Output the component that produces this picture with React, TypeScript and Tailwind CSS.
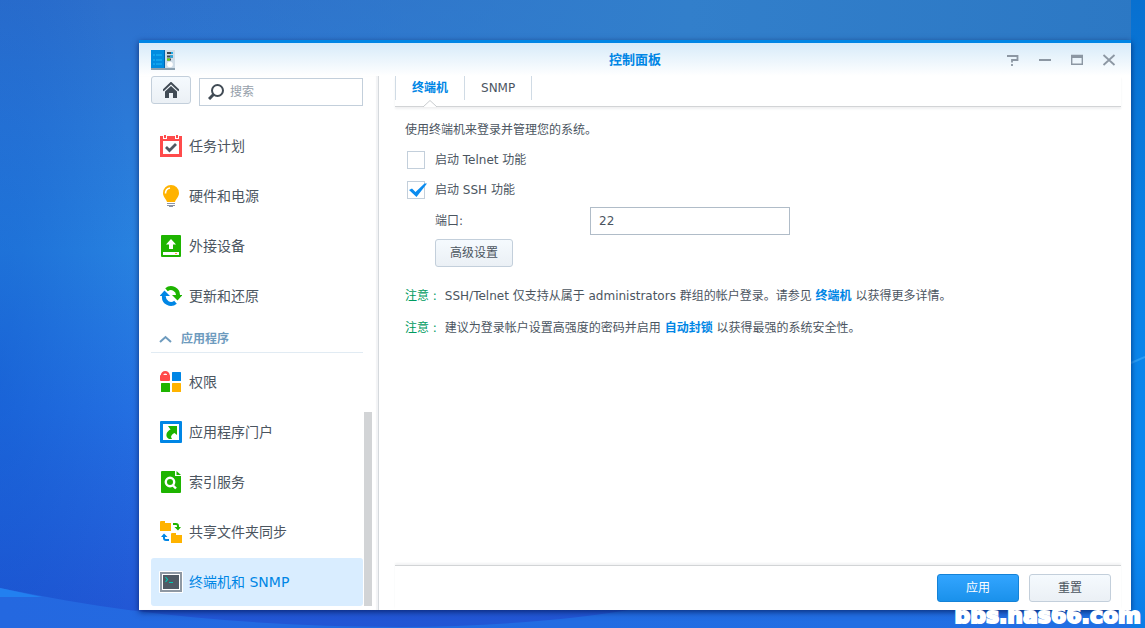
import { useState, type ReactNode } from "react";

const ICON = "h-[22px] w-[22px] shrink-0";

function TaskIcon() {
  return (
    <svg viewBox="0 0 22 22" className={ICON}>
      <path d="M0 1h3v3h4V1h8v3h4V1h3v21H0z" fill="#ff4b4b" />
      <path d="M4 0h2v3H4zM16 0h2v3h-2z" fill="#ff4b4b" />
      <path d="M3 6h16v13H3z" fill="#fff" />
      <path d="M6 12l3.500 3.500L16 9" fill="none" stroke="#505a64" strokeWidth="2.800" />
    </svg>
  );
}

function BulbIcon() {
  return (
    <svg viewBox="0 0 22 22" className={ICON}>
      <path
        d="M11 0a8 8 0 0 0-8 8c0 4 3 5.500 4 9h8c1-3.500 4-5 4-9a8 8 0 0 0-8-8z"
        fill="#ffb300"
      />
      <path d="M5.500 8.500A5.500 5.500 0 0 1 10 3" fill="none" stroke="#fff" strokeWidth="1.600" />
      <path d="M7 18h8v1H7zM7 20h8v1H7zM9 21h4v1H9z" fill="#8c94a5" />
    </svg>
  );
}

function DeviceIcon() {
  return (
    <svg viewBox="0 0 22 22" className={ICON}>
      <rect x="1" width="20" height="22" rx="1" fill="#1eb400" />
      <path d="M11 4l5 5.500h-3V14H9V9.500H6z" fill="#fff" />
      <path d="M3 17h16v3H3z" fill="#fff" />
      <path d="M15 18h2v1h-2z" fill="#ffa030" />
    </svg>
  );
}

function RestoreIcon() {
  return (
    <svg viewBox="0 0 22 22" className={ICON}>
      <path d="M6.500 4.800A7 7 0 0 1 18 10.500" fill="none" stroke="#1eb400" strokeWidth="4" />
      <path d="M12 10h10.500L17.500 15.500z" fill="#1eb400" />
      <path d="M15.500 17.200A7 7 0 0 1 4 11" fill="none" stroke="#0086e5" strokeWidth="4" />
      <path d="M-.5 11h10.500L4.500 5.500z" fill="#0086e5" />
    </svg>
  );
}

function PrivilegeIcon() {
  return (
    <svg viewBox="0 0 22 22" className={ICON}>
      <path d="M2 6V4.500a3.200 3.200 0 0 1 6.500 0V6" fill="none" stroke="#ff4b4b" strokeWidth="2.500" />
      <rect y="4" width="10" height="6" rx="1" fill="#ff4b4b" />
      <rect x="12" y="1" width="9" height="9" rx=".5" fill="#0086e5" />
      <rect x="1" y="12" width="9" height="9" rx=".5" fill="#1eb400" />
      <rect x="12" y="12" width="9" height="9" rx=".5" fill="#ffb300" />
    </svg>
  );
}

function PortalIcon() {
  return (
    <svg viewBox="0 0 22 22" className={ICON}>
      <rect width="22" height="22" rx="1" fill="#0086e5" />
      <path d="M3 3h16v16H3z" fill="#fff" />
      <path
        d="M8 5h9v9l-2.500-2c-2 1-3.500 2.500-3.500 4l1 2H9c-2-1-3-3-2.500-5 .5-2 2-3.500 4-4.500z"
        fill="#1eb400"
      />
    </svg>
  );
}

function IndexIcon() {
  return (
    <svg viewBox="0 0 22 22" className={ICON}>
      <path d="M2 0h13v5h6v16a1 1 0 0 1-1 1H2a1 1 0 0 1-1-1V1a1 1 0 0 1 1-1z" fill="#1eb400" />
      <path d="M16.500 0L21 4h-4.500z" fill="#1eb400" />
      <circle cx="10" cy="11" r="4.200" fill="none" stroke="#fff" strokeWidth="2.400" />
      <path d="M12.500 14l3.500 3.500" stroke="#fff" strokeWidth="2.400" />
    </svg>
  );
}

function SyncIcon() {
  return (
    <svg viewBox="0 0 22 22" className={ICON}>
      <path d="M0 1a1 1 0 0 1 1-1h4v2h6v8H0z" fill="#ffb300" />
      <path d="M11 13a1 1 0 0 1 1-1h4v2h6v8H11z" fill="#ffb300" />
      <path d="M13 2h3c2 0 3 1 3 3v1h2l-3 3.500L14.500 6H17V5c0-1-.5-1-1.500-1H13z" fill="#1eb400" />
      <path d="M9 20H6c-2 0-3-1-3-3v-1H1l3-3.500L7.500 16H5v1c0 1 .5 1 1.500 1H9z" fill="#0086e5" />
    </svg>
  );
}

function TerminalIcon() {
  return (
    <svg viewBox="0 0 22 22" className={`${ICON} overflow-visible`}>
      <rect x="-1" width="24" height="22" rx="1" fill="#fff" />
      <rect y="1" width="22" height="20" fill="#8e98a3" />
      <path d="M2 3h18v16H2z" fill="#fff" />
      <path d="M3 4h16v14H3z" fill="#505a64" />
      <path d="M5.500 6l2 2.500-2 2.500M9 11.500h4" fill="none" stroke="#00c8b4" strokeWidth="1.200" />
    </svg>
  );
}

function PanelLogo() {
  return (
    <svg viewBox="0 0 24 22" className="h-[22px] w-6">
      <path d="M0 19h24v2H0z" fill="#8aa0b0" />
      <path d="M0 1h14v18H0z" fill="#008ce0" />
      <path d="M13 1h1v18h-1z" fill="#0064af" />
      <path d="M14 1h10v18H14z" fill="#cfdde8" />
      <path d="M2 6h2M5 6h6M2 11h2M5 11h6M2 15h2M5 15h6" stroke="#1eb9fa" />
      <path d="M16 4h6M16 7.500h6M16 10.500h4" stroke="#3c464f" strokeWidth="2" />
      <path d="M20 4h2M19 7.500h3" stroke="#1eaae6" strokeWidth="2" />
      <path d="M16 10.500h3" stroke="#6ed200" strokeWidth="2" />
      <circle cx="19" cy="15.500" r="2.800" fill="#fff" />
    </svg>
  );
}

const SYSTEM_ITEMS = [
  { label: "任务计划", icon: <TaskIcon /> },
  { label: "硬件和电源", icon: <BulbIcon /> },
  { label: "外接设备", icon: <DeviceIcon /> },
  { label: "更新和还原", icon: <RestoreIcon /> },
];

const APP_ITEMS = [
  { label: "权限", icon: <PrivilegeIcon /> },
  { label: "应用程序门户", icon: <PortalIcon /> },
  { label: "索引服务", icon: <IndexIcon /> },
  { label: "共享文件夹同步", icon: <SyncIcon /> },
  { label: "终端机和 SNMP", icon: <TerminalIcon /> },
];

function NavItem({
  label,
  icon,
  active,
  onClick,
}: {
  label: string;
  icon: ReactNode;
  active: boolean;
  onClick: () => void;
}) {
  return (
    <button
      type="button"
      onClick={onClick}
      className={`my-px flex h-12 w-full items-center gap-[7px] rounded-[3px] pl-[9px] text-left text-sm ${
        active ? "bg-[#d9edff] text-[#0086e5]" : "text-[#4b555f]"
      }`}
    >
      {icon}
      {label}
    </button>
  );
}

function CheckRow({
  label,
  checked,
  onChange,
}: {
  label: string;
  checked: boolean;
  onChange: (value: boolean) => void;
}) {
  return (
    <label className="flex h-[30px] items-center gap-[10px] pl-[2px]">
      <span className="grid">
        <input
          type="checkbox"
          checked={checked}
          onChange={(e) => onChange(e.target.checked)}
          className="peer col-start-1 row-start-1 h-[18px] w-[18px] appearance-none border border-[#c3cfdb] bg-white"
        />
        <svg
          viewBox="0 0 18 18"
          className="pointer-events-none invisible col-start-1 row-start-1 h-[18px] w-[18px] overflow-visible peer-checked:visible"
        >
          <path d="M2 9l3-1.500L8.500 11 17.500 2.500h2.500L9.500 16z" fill="#0a8cf0" />
        </svg>
      </span>
      {label}
    </label>
  );
}

function Wallpaper() {
  return (
    <svg
      viewBox="0 0 1145 628"
      preserveAspectRatio="none"
      className="absolute inset-0 -z-10 h-full w-full"
    >
      <defs>
        <linearGradient id="sky" x1="0" y1="0" x2="0" y2="1">
          <stop offset="0" stopColor="#2d70cc" />
          <stop offset=".2" stopColor="#2b7ad8" />
          <stop offset=".4" stopColor="#2882e0" />
          <stop offset=".65" stopColor="#2470e2" />
          <stop offset="1" stopColor="#2255d4" />
        </linearGradient>
        <linearGradient id="top" x1="0" y1="0" x2="1" y2="0">
          <stop offset="0" stopColor="#327fcb" stopOpacity="0" />
          <stop offset=".12" stopColor="#327fcb" stopOpacity="0" />
          <stop offset=".6" stopColor="#327fcb" />
          <stop offset="1" stopColor="#2c78c4" />
        </linearGradient>
        <radialGradient id="shade" cx="0" cy=".6" r="1">
          <stop offset="0" stopColor="#0a50c8" stopOpacity=".4" />
          <stop offset="1" stopColor="#0a50c8" stopOpacity="0" />
        </radialGradient>
        <linearGradient id="wave" x1="0" y1="0" x2="1" y2="0">
          <stop offset="0" stopColor="#2468e0" />
          <stop offset="1" stopColor="#2070e4" />
        </linearGradient>
        <linearGradient id="edge" x1="0" y1="0" x2="0" y2="1">
          <stop offset="0" stopColor="#0870d0" />
          <stop offset=".4" stopColor="#0a82e6" />
          <stop offset=".85" stopColor="#0a8af2" />
          <stop offset="1" stopColor="#0c7ce6" />
        </linearGradient>
      </defs>
      <rect width="1145" height="628" fill="url(#sky)" />
      <rect width="1145" height="44" fill="url(#top)" />
      <rect width="139" height="628" fill="url(#shade)" />
      <path d="M0 588C140 617 260 626 400 627Q540 626 640 608H1145V628H0z" fill="url(#wave)" />
      <path d="M0 588L42 597H0z" fill="#2280f0" />
      <rect x="1131" width="14" height="628" fill="url(#edge)" />
      <path d="M1131 363l14-6" stroke="#2a9cf4" strokeWidth="2" />
    </svg>
  );
}

export default function App() {
  const [active, setActive] = useState("终端机和 SNMP");
  const [telnet, setTelnet] = useState(false);
  const [ssh, setSsh] = useState(true);
  const [port, setPort] = useState("22");

  const plainButton =
    "h-7 rounded-[3px] border border-[#c3cfdb] bg-linear-to-b from-[#f5fafe] to-[#ebf0f5]";

  return (
    <div className="relative isolate flex min-h-screen flex-col pt-10 pr-[14px] pb-[18px] pl-[139px] font-['DejaVu_Sans','Noto_Sans_CJK_SC',sans-serif] text-xs text-[#4b555f]">
      <Wallpaper />

      <main className="flex flex-1 flex-col border-t-[3px] border-[#0086e5] bg-white shadow-[0_2px_6px_rgba(0,20,80,0.7)]">
        <header className="grid h-[33px] grid-cols-3 items-center bg-linear-to-b from-[#d7ebf9] to-white px-3">
          <PanelLogo />
          <h1 className="text-center text-[13px] font-bold text-[#0086e5]">控制面板</h1>
          <div className="flex justify-end gap-4 pr-[2px] text-[#8c97a3]">
            <button type="button" aria-label="帮助">
              <svg viewBox="0 0 16 16" className="h-4 w-4">
                <path d="M2 4h10.500v4H7v2.500M7 12v2" fill="none" stroke="currentColor" strokeWidth="1.800" />
              </svg>
            </button>
            <button type="button" aria-label="最小化">
              <svg viewBox="0 0 16 16" className="h-4 w-4">
                <path d="M2 8h12" stroke="currentColor" strokeWidth="2" />
              </svg>
            </button>
            <button type="button" aria-label="最大化">
              <svg viewBox="0 0 16 16" className="h-4 w-4">
                <path d="M2 3h12v3H2z" fill="currentColor" />
                <path d="M2.700 3.500h10.600v8.800H2.700z" fill="none" stroke="currentColor" strokeWidth="1.400" />
              </svg>
            </button>
            <button type="button" aria-label="关闭">
              <svg viewBox="0 0 16 16" className="h-4 w-4">
                <path d="M2.500 3l11 10M13.500 3l-11 10" stroke="currentColor" strokeWidth="1.800" />
              </svg>
            </button>
          </div>
        </header>

        <div className="flex flex-1">
          <aside className="flex w-[240px] shrink-0 flex-col border-r border-[#d5d9dd] pl-3 shadow-[inset_-2px_0_1px_#f2f3f5]">
            <div className="flex gap-2 pr-[15px]">
              <button
                type="button"
                aria-label="主页"
                className={`${plainButton} flex w-10 shrink-0 items-center justify-center`}
              >
                <svg viewBox="0 0 16 16" className="h-4 w-4">
                  <path d="M0 8.500L8 1l8 7.500" fill="none" stroke="#414b55" strokeWidth="2" />
                  <path d="M2 9.500L8 4l6 5.500V16h-4v-5H6v5H2z" fill="#414b55" />
                </svg>
              </button>
              <label className="mt-[2px] flex h-7 min-w-0 flex-1 items-center gap-[6px] border border-[#c3cfdb] px-2">
                <svg viewBox="0 0 16 16" className="h-4 w-4 shrink-0">
                  <circle cx="9.500" cy="6.500" r="5.500" fill="none" stroke="#414b55" strokeWidth="2" />
                  <path d="M5.500 10.500L1 15" stroke="#414b55" strokeWidth="3" />
                </svg>
                <input
                  type="text"
                  aria-label="搜索"
                  placeholder="搜索"
                  className="w-full min-w-0 outline-none placeholder:text-[#96a0aa]"
                />
              </label>
            </div>

            <div className="mt-[15px] flex flex-1">
              <nav className="flex w-[212px] flex-col">
                {SYSTEM_ITEMS.map((item) => (
                  <NavItem
                    key={item.label}
                    {...item}
                    active={active === item.label}
                    onClick={() => setActive(item.label)}
                  />
                ))}
                <h2 className="mb-1 flex h-8 items-center gap-[9px] border-b border-[#e1ebf3] pt-1 pl-2 font-bold text-[#6e9bbe]">
                  <svg viewBox="0 0 13 8" className="h-2 w-[13px]">
                    <path d="M1 7l5.500-5L12 7" fill="none" stroke="currentColor" strokeWidth="2" />
                  </svg>
                  应用程序
                </h2>
                {APP_ITEMS.map((item) => (
                  <NavItem
                    key={item.label}
                    {...item}
                    active={active === item.label}
                    onClick={() => setActive(item.label)}
                  />
                ))}
              </nav>
              {/* scrollbar thumb */}
              <div className="mb-1 ml-px flex w-2 flex-col justify-end">
                <div className="h-2/5 bg-[#d2d4d6]" />
              </div>
            </div>
          </aside>

          <section className="flex min-w-0 flex-1 flex-col pr-[10px] pl-4">
            <div className="flex h-[31px] items-start border-b border-[#d2d4d6] shadow-[0_2px_2px_#f0f1f2]">
              <div role="tablist" className="flex border-l border-[#d0dbe5]">
                <button
                  type="button"
                  role="tab"
                  aria-selected="true"
                  className="relative h-6 border-r border-[#d0dbe5] px-4 font-bold text-[#0086e5]"
                >
                  终端机
                  <svg viewBox="0 0 14 7" className="absolute top-6 left-[27px] h-[7px] w-[14px]">
                    <path d="M0 7L7 .5l7 6.500" fill="#fff" stroke="#c8cbce" />
                  </svg>
                </button>
                <button
                  type="button"
                  role="tab"
                  aria-selected="false"
                  className="h-6 border-r border-[#d0dbe5] px-4"
                >
                  SNMP
                </button>
              </div>
            </div>

            <div className="flex-1 pt-[15px] pl-[10px]">
              <p className="mb-[7px] leading-4">使用终端机来登录并管理您的系统。</p>
              <CheckRow label="启动 Telnet 功能" checked={telnet} onChange={setTelnet} />
              <CheckRow label="启动 SSH 功能" checked={ssh} onChange={setSsh} />
              <div className="mt-[2px] flex items-center pl-[30px]">
                <label htmlFor="port" className="w-[155px]">
                  端口:
                </label>
                <input
                  id="port"
                  type="text"
                  value={port}
                  onChange={(e) => setPort(e.target.value)}
                  className="h-7 w-[200px] border border-[#b0bcc8] px-2 outline-none"
                />
              </div>
              <button type="button" className={`${plainButton} mt-1 ml-[30px] px-[14px]`}>
                高级设置
              </button>
              <div className="mt-[21px] space-y-4 leading-4">
                <p>
                  <span className="mr-2 text-[#009b5f]">注意 :</span>
                  SSH/Telnet 仅支持从属于 administrators 群组的帐户登录。请参见{" "}
                  <a href="#terminal" className="font-bold text-[#0086e5]">
                    终端机
                  </a>{" "}
                  以获得更多详情。
                </p>
                <p>
                  <span className="mr-2 text-[#009b5f]">注意 :</span>
                  建议为登录帐户设置高强度的密码并启用{" "}
                  <a href="#autoblock" className="font-bold text-[#0086e5]">
                    自动封锁
                  </a>{" "}
                  以获得最强的系统安全性。
                </p>
              </div>
            </div>

            <footer className="flex justify-end gap-[10px] border-t border-[#d2d4d6] pt-2 pr-[10px] pb-2 shadow-[0_-2px_2px_#f3f4f5]">
              <button
                type="button"
                className="h-7 w-[82px] rounded-[3px] border border-[#1482d7] bg-linear-to-b from-[#32a5ff] to-[#1991eb] text-white"
              >
                应用
              </button>
              <button type="button" className={`${plainButton} w-[82px]`}>
                重置
              </button>
            </footer>
          </section>
        </div>
      </main>

      <div className="absolute right-1 bottom-0 text-[22px] leading-6 font-bold text-white [-webkit-text-stroke:2px_white]">
        bbs.nas66.com
      </div>
    </div>
  );
}
